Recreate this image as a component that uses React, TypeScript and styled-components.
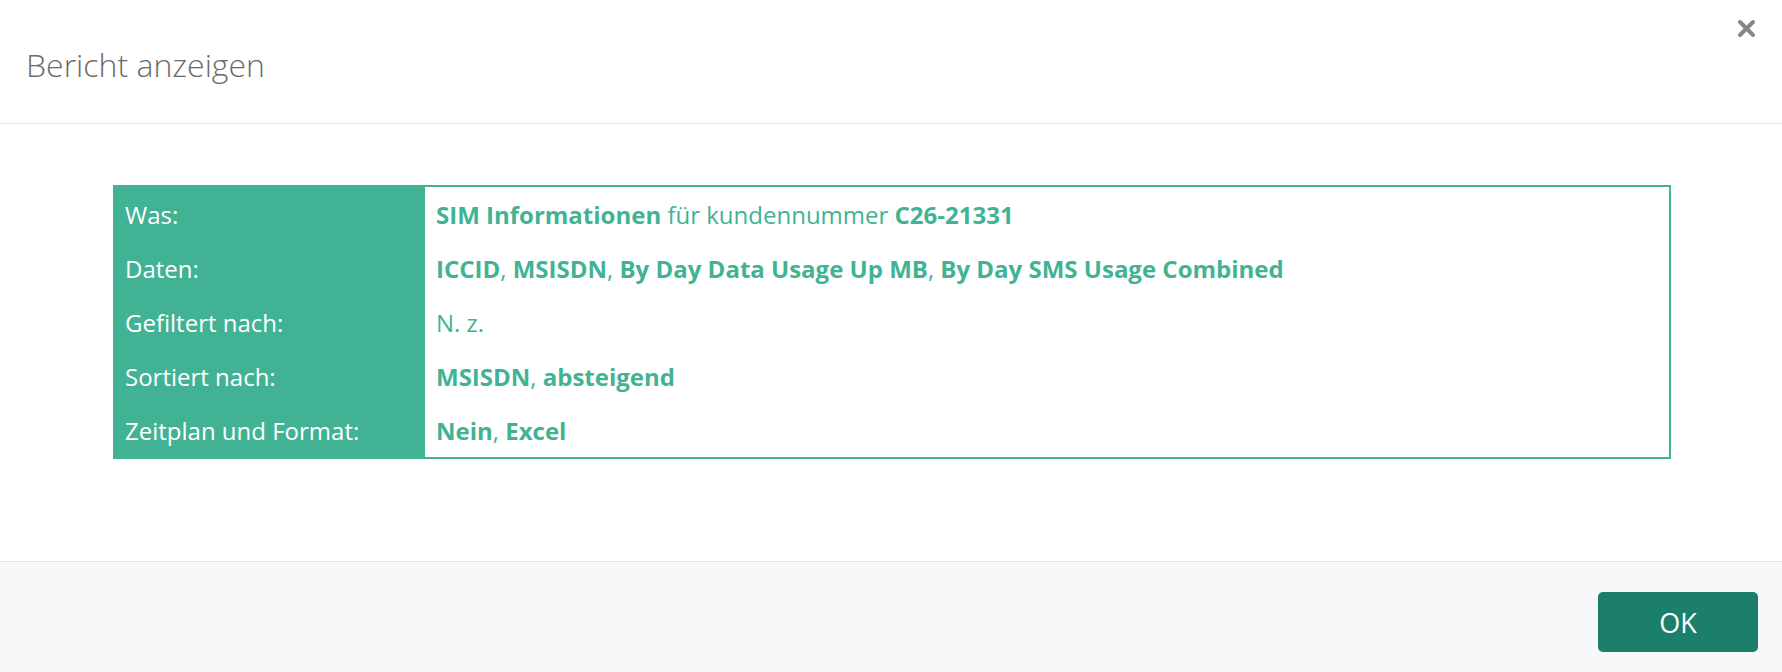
import React from "react";
import styled, { createGlobalStyle } from "styled-components";

const Global = createGlobalStyle`
  html, body { margin: 0; padding: 0; background: #ffffff; }
  body { font-family: "Open Sans", "Noto Sans", sans-serif; }
  * { box-sizing: border-box; }
`;

const Modal = styled.div`
  width: 1782px;
  height: 672px;
  display: flex;
  flex-direction: column;
  background: #ffffff;
`;

const Header = styled.header`
  position: relative;
  height: 124px;
  display: flex;
  align-items: center;
  padding: 6px 27px 0 26px;
  border-bottom: 1px solid #e3e3e3;
`;

const Title = styled.h1`
  margin: 0;
  font-family: "Open Sans", sans-serif;
  font-weight: 300;
  font-size: 32px;
  color: #6b6b6b;
  line-height: 1;
`;

const Close = styled.button`
  position: absolute;
  top: 18px;
  right: 26px;
  width: 20px;
  height: 20px;
  padding: 0;
  border: 0;
  background: transparent;
  cursor: pointer;
  display: flex;
  align-items: center;
  justify-content: center;
`;

const Body = styled.main`
  flex: 1;
  padding: 61px 111px 0 113px;
`;

const Table = styled.div`
  display: grid;
  grid-template-columns: 310px 1fr;
  border: 2px solid #41b394;
`;

const Label = styled.div`
  background: #41b394;
  color: #ffffff;
  height: 54px;
  display: flex;
  align-items: center;
  padding-left: 10px;
  font-size: 24px;
  font-weight: 400;
`;

const Value = styled.div`
  height: 54px;
  display: flex;
  align-items: center;
  padding-left: 11px;
  font-size: 24px;
  color: #41b394;
  white-space: pre;
`;

const B = styled.b`
  font-weight: 700;
`;

const Footer = styled.footer`
  height: 111px;
  border-top: 1px solid #e3e3e3;
  background: #f7f8fa;
  display: flex;
  justify-content: flex-end;
  align-items: flex-start;
  padding: 30px 24px 0 0;
`;

const OkButton = styled.button`
  width: 160px;
  height: 60px;
  border: 0;
  border-radius: 5px;
  background: #1c7f6c;
  color: #ffffff;
  font-family: "Open Sans", sans-serif;
  font-size: 27px;
  font-weight: 400;
  cursor: pointer;
`;

const rows: { label: string; value: React.ReactNode }[] = [
  {
    label: "Was:",
    value: (
      <>
        <B>SIM Informationen</B> für kundennummer <B>C26-21331</B>
      </>
    ),
  },
  {
    label: "Daten:",
    value: (
      <>
        <B>ICCID</B>, <B>MSISDN</B>, <B>By Day Data Usage Up MB</B>, <B>By Day SMS Usage Combined</B>
      </>
    ),
  },
  { label: "Gefiltert nach:", value: "N. z." },
  {
    label: "Sortiert nach:",
    value: (
      <>
        <B>MSISDN</B>, <B>absteigend</B>
      </>
    ),
  },
  {
    label: "Zeitplan und Format:",
    value: (
      <>
        <B>Nein</B>, <B>Excel</B>
      </>
    ),
  },
];

export default function App() {
  return (
    <Modal>
      <Global />
      <Header>
        <Title>Bericht anzeigen</Title>
        <Close aria-label="Schließen">
          <svg width="19" height="19" viewBox="0 0 19 19">
            <path d="M3 3 L16 16 M16 3 L3 16" stroke="#878787" strokeWidth="4" strokeLinecap="round" />
          </svg>
        </Close>
      </Header>
      <Body>
        <Table>
          {rows.map((r) => (
            <React.Fragment key={r.label}>
              <Label>{r.label}</Label>
              <Value>{r.value}</Value>
            </React.Fragment>
          ))}
        </Table>
      </Body>
      <Footer>
        <OkButton>OK</OkButton>
      </Footer>
    </Modal>
  );
}
